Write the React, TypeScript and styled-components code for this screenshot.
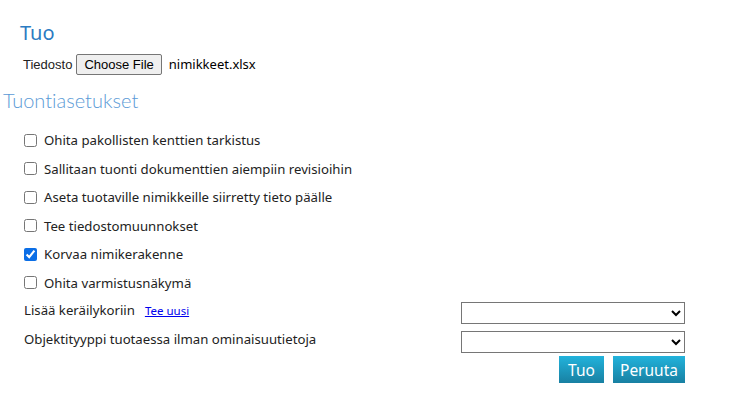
import React from "react";
import styled, { createGlobalStyle } from "styled-components";

const Global = createGlobalStyle`
  body {
    margin: 0;
    background: #fff;
    font-family: "Noto Sans", "Open Sans", sans-serif;
    color: #222;
  }
`;

const Page = styled.div`
  width: 737px;
  padding-top: 20px;
`;

const Title = styled.h2`
  margin: 0 0 7px 20px;
  font-size: 20px;
  font-weight: 400;
  line-height: 26px;
  color: #2b7bc2;
`;

const FileRow = styled.div`
  display: flex;
  align-items: center;
  gap: 4px;
  padding-left: 23px;
  height: 22px;
  font-family: "Liberation Sans", Arial, sans-serif;
  font-size: 13px;
`;

const FileButton = styled.button`
  font-family: "Liberation Sans", Arial, sans-serif;
  font-size: 13px;
  height: 21px;
  padding: 0 7px;
  background: #efefef;
  border: 1px solid #767676;
  border-radius: 2px;
  color: #000;
`;

const FileName = styled.span`
  margin-left: 3px;
  font-family: "Noto Sans", sans-serif;
  font-size: 13px;
  color: #000;
`;

const SectionTitle = styled.h3`
  margin: 12px 0 19px 3px;
  font-family: Lato, "Noto Sans", sans-serif;
  font-size: 20px;
  font-weight: 300;
  line-height: 26px;
  color: #5b9ad6;
  font-variant-ligatures: none;
`;

const Options = styled.div`
  display: flex;
  flex-direction: column;
  gap: 12px;
  padding-left: 24px;
`;

const Option = styled.label`
  display: flex;
  align-items: center;
  gap: 7px;
  height: 16.5px;
  font-size: 13.2px;
`;

const Check = styled.input`
  margin: 0;
  width: 13px;
  height: 13px;
  accent-color: #0b6ee6;
`;

const Fields = styled.div`
  display: flex;
  flex-direction: column;
  gap: 7px;
  margin-top: 11px;
  width: 685px;
`;

const FieldRow = styled.div`
  display: flex;
  align-items: center;
  justify-content: space-between;
  padding-left: 24px;
  font-size: 13.2px;
`;

const LabelGroup = styled.div`
  display: flex;
  align-items: center;
  gap: 10px;
  margin-top: -6px;
`;

const NewLink = styled.a`
  color: #0000ee;
  font-size: 11.5px;
  text-decoration: underline;
`;

const Select = styled.select`
  width: 224px;
  height: 22px;
  border: 1px solid #767676;
  border-radius: 0;
  background: #fff;
`;

const Actions = styled.div`
  display: flex;
  justify-content: flex-end;
  gap: 9px;
  margin-top: -4px;
`;

const ActionButton = styled.button<{ $width: number }>`
  width: ${({ $width }) => $width}px;
  height: 27px;
  padding: 0;
  border: none;
  background: linear-gradient(#22b3dc, #1880a2);
  color: #fff;
  font-family: "Noto Sans", sans-serif;
  font-size: 15.5px;
`;

const options = [
  { label: "Ohita pakollisten kenttien tarkistus", checked: false },
  { label: "Sallitaan tuonti dokumenttien aiempiin revisioihin", checked: false },
  { label: "Aseta tuotaville nimikkeille siirretty tieto päälle", checked: false },
  { label: "Tee tiedostomuunnokset", checked: false },
  { label: "Korvaa nimikerakenne", checked: true },
  { label: "Ohita varmistusnäkymä", checked: false },
];

const App = () => {
  return (
    <Page>
      <Global />
      <Title>Tuo</Title>
      <FileRow>
        <span>Tiedosto</span>
        <FileButton>Choose File</FileButton>
        <FileName>nimikkeet.xlsx</FileName>
      </FileRow>
      <SectionTitle>Tuontiasetukset</SectionTitle>
      <Options>
        {options.map((o) => (
          <Option key={o.label}>
            <Check type="checkbox" defaultChecked={o.checked} />
            {o.label}
          </Option>
        ))}
      </Options>
      <Fields>
        <FieldRow>
          <LabelGroup>
            <span>Lisää keräilykoriin</span>
            <NewLink href="#">Tee uusi</NewLink>
          </LabelGroup>
          <Select />
        </FieldRow>
        <FieldRow>
          <LabelGroup>
            <span>Objektityyppi tuotaessa ilman ominaisuutietoja</span>
          </LabelGroup>
          <Select />
        </FieldRow>
        <Actions>
          <ActionButton $width={45}>Tuo</ActionButton>
          <ActionButton $width={72}>Peruuta</ActionButton>
        </Actions>
      </Fields>
    </Page>
  );
};

export default App;
